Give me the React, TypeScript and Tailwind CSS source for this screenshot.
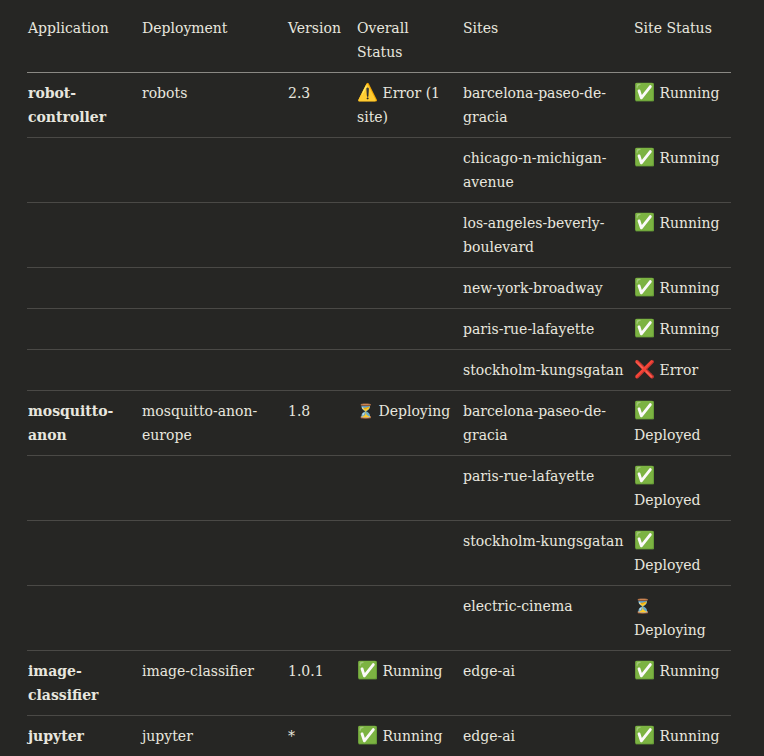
const rows: [string, string, string, string, string, string][] = [
  ["robot-controller", "robots", "2.3", "⚠️ Error (1 site)", "barcelona-paseo-de-gracia", "✅ Running"],
  ["", "", "", "", "chicago-n-michigan-avenue", "✅ Running"],
  ["", "", "", "", "los-angeles-beverly-boulevard", "✅ Running"],
  ["", "", "", "", "new-york-broadway", "✅ Running"],
  ["", "", "", "", "paris-rue-lafayette", "✅ Running"],
  ["", "", "", "", "stockholm-kungsgatan", "❌ Error"],
  ["mosquitto-anon", "mosquitto-anon-europe", "1.8", "⏳ Deploying", "barcelona-paseo-de-gracia", "✅ Deployed"],
  ["", "", "", "", "paris-rue-lafayette", "✅ Deployed"],
  ["", "", "", "", "stockholm-kungsgatan", "✅ Deployed"],
  ["", "", "", "", "electric-cinema", "⏳ Deploying"],
  ["image-classifier", "image-classifier", "1.0.1", "✅ Running", "edge-ai", "✅ Running"],
  ["jupyter", "jupyter", "*", "✅ Running", "edge-ai", "✅ Running"],
];

const heads = ["Application", "Deployment", "Version", "Overall Status", "Sites", "Site Status"];
const widths = ["w-[114px]", "w-[146px]", "w-[69px]", "w-[106px]", "w-[171px]", "w-[98px]"];

function Cell({ text }: { text: string }) {
  const m = text.match(/^(\S+) (.*)$/);
  if (m && /[\u2600-\u27bf\u{1F300}-\u{1FAFF}]/u.test(m[1])) {
    return (
      <>
        <span className="text-[17px] leading-[20px]">{m[1]}</span>
        {" " + m[2]}
      </>
    );
  }
  return <>{text}</>;
}

export default function App() {
  return (
    <div
      className="min-h-[756px] bg-[#262624] px-[27px] pt-[8px] text-[14px] leading-[24px] text-[#e8e6df]"
      style={{ fontFamily: '"DejaVu Serif", serif' }}
    >
      <table className="w-[704px] table-fixed border-collapse text-left">
        <thead>
          <tr className="border-b border-[#8a8984]">
            {heads.map((h, i) => (
              <th key={h} className={`${widths[i]} pl-[1px] pr-2 pb-[8px] pt-[8px] align-top font-medium`}>
                {h}
              </th>
            ))}
          </tr>
        </thead>
        <tbody>
          {rows.map((r, ri) => (
            <tr key={ri} className="border-b border-[#4a4946]">
              {r.map((c, ci) => (
                <td key={ci} className={`pl-[1px] pr-2 pt-[8px] pb-[8px] align-top ${ci === 0 ? "font-semibold" : ""}`}>
                  <Cell text={c} />
                </td>
              ))}
            </tr>
          ))}
        </tbody>
      </table>
    </div>
  );
}
